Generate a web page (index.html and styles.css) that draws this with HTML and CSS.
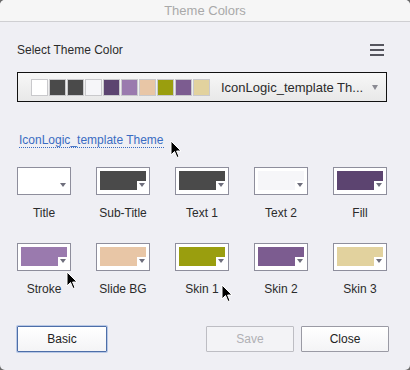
FILE: index.html
```html
<!DOCTYPE html>
<html lang="en">
<head>
  <meta charset="UTF-8" />
  <title>Theme Colors</title>
  <link rel="stylesheet" href="styles.css">
</head>
<body>
  <div class="window">
    <div class="titlebar">Theme Colors</div>
    <div class="content">
      <div class="header-row">
        <span class="label">Select Theme Color</span>
        <span class="menu-icon"><i></i><i></i><i></i></span>
      </div>

      <div class="theme-select">
        <div class="strip">
          <span style="background:#ffffff"></span>
          <span style="background:#4a4a4a"></span>
          <span style="background:#4a4a4a"></span>
          <span style="background:#f6f6f9"></span>
          <span style="background:#5c4470"></span>
          <span style="background:#9a7aae"></span>
          <span style="background:#e8c6a6"></span>
          <span style="background:#9a9e0e"></span>
          <span style="background:#7c5c90"></span>
          <span style="background:#e2d29e"></span>
        </div>
        <span class="select-text">IconLogic_template Th...</span>
        <span class="select-arrow"></span>
      </div>

      <div class="theme-link-row">
        <a class="theme-link">IconLogic_template Theme</a>
      </div>

      <div class="color-grid">
        <div class="color-item"><div class="swatch"><div class="fill" style="background:#ffffff"></div></div><div class="name">Title</div></div>
        <div class="color-item"><div class="swatch"><div class="fill" style="background:#4a4a4a"></div></div><div class="name">Sub-Title</div></div>
        <div class="color-item"><div class="swatch"><div class="fill" style="background:#4a4a4a"></div></div><div class="name">Text 1</div></div>
        <div class="color-item"><div class="swatch"><div class="fill" style="background:#f6f6f9"></div></div><div class="name">Text 2</div></div>
        <div class="color-item"><div class="swatch"><div class="fill" style="background:#5c4470"></div></div><div class="name">Fill</div></div>
        <div class="color-item"><div class="swatch"><div class="fill" style="background:#9a7aae"></div></div><div class="name">Stroke</div></div>
        <div class="color-item"><div class="swatch"><div class="fill" style="background:#e8c6a6"></div></div><div class="name">Slide BG</div></div>
        <div class="color-item"><div class="swatch"><div class="fill" style="background:#9a9e0e"></div></div><div class="name">Skin 1</div></div>
        <div class="color-item"><div class="swatch"><div class="fill" style="background:#7c5c90"></div></div><div class="name">Skin 2</div></div>
        <div class="color-item"><div class="swatch"><div class="fill" style="background:#e2d29e"></div></div><div class="name">Skin 3</div></div>
      </div>

      <div class="button-row">
        <button class="btn btn-focus">Basic</button>
        <span class="spacer"></span>
        <button class="btn" disabled>Save</button>
        <button class="btn">Close</button>
      </div>
    </div>

    <!-- mouse pointers captured in the shot -->
    <svg class="cursor c1" width="12" height="19" viewBox="0 0 12 19"><path d="M1 1 L1 15 L4.5 11.5 L7 17.5 L9 16.6 L6.6 11 L11 11 Z" fill="#000" stroke="#fff" stroke-width="1"/></svg>
    <svg class="cursor c2" width="12" height="19" viewBox="0 0 12 19"><path d="M1 1 L1 15 L4.5 11.5 L7 17.5 L9 16.6 L6.6 11 L11 11 Z" fill="#000" stroke="#fff" stroke-width="1"/></svg>
    <svg class="cursor c3" width="12" height="19" viewBox="0 0 12 19"><path d="M1 1 L1 15 L4.5 11.5 L7 17.5 L9 16.6 L6.6 11 L11 11 Z" fill="#000" stroke="#fff" stroke-width="1"/></svg>
  </div>
</body>
</html>
```

FILE: styles.css
```css
* {
  box-sizing: border-box;
  margin: 0;
  padding: 0;
}

html, body {
  height: 100%;
  background: #6a6a6a;
  overflow: hidden;
}

body {
  font-family: "Liberation Sans", Arial, sans-serif;
  color: #2b2b2b;
}

.window {
  position: relative;
  width: 410px;
  height: 370px;
  background: #efeff4;
  border-radius: 5px;
  overflow: hidden;
}

.titlebar {
  height: 22px;
  background: #f6f6f6;
  border-bottom: 1px solid #cfcfd2;
  text-align: center;
  font-size: 13px;
  line-height: 21px;
  color: #a9a9a9;
}

.content {
  padding: 21px 23px 0 17px;
}

.header-row {
  display: flex;
  justify-content: space-between;
  align-items: center;
  height: 14px;
}

.label {
  font-size: 12px;
  line-height: 14px;
}

.menu-icon {
  display: flex;
  flex-direction: column;
  gap: 3px;
  width: 14px;
  margin-right: 3px;
}

.menu-icon i {
  display: block;
  height: 2px;
  background: #55555e;
}

.theme-select {
  display: flex;
  align-items: center;
  height: 30px;
  margin-top: 15px;
  border: 1px solid #111;
  background: linear-gradient(#f7f7f7, #e8e8e8);
  padding-left: 13px;
}

.strip {
  display: flex;
  gap: 1px;
}

.strip span {
  width: 17px;
  height: 17px;
  border: 1px solid #c9c9cc;
}

.select-text {
  flex: 1;
  margin-left: 11px;
  font-size: 13px;
  color: #2b2b2b;
}

.select-arrow {
  width: 0;
  height: 0;
  margin-right: 8px;
  border-left: 3.5px solid transparent;
  border-right: 3.5px solid transparent;
  border-top: 5px solid #8a8a92;
}

.theme-link-row {
  margin-top: 28px;
  padding-left: 2px;
  height: 14px;
}

.theme-link {
  font-size: 12px;
  line-height: 13px;
  color: #3a6cc2;
  border-bottom: 1px dotted #3a6cc2;
  display: inline-block;
}

.color-grid {
  display: grid;
  grid-template-columns: repeat(5, 54px);
  column-gap: 25px;
  row-gap: 23px;
  margin-top: 23px;
}

.color-item {
  display: flex;
  flex-direction: column;
  align-items: center;
}

.swatch {
  position: relative;
  width: 54px;
  height: 28px;
  border: 1px solid #8e8e9c;
  background: #fff;
  padding: 3px 3px 4px 3px;
}

.fill {
  width: 100%;
  height: 100%;
}

.swatch::after {
  content: "";
  position: absolute;
  right: 3px;
  bottom: 4px;
  width: 9px;
  height: 9px;
  background: #fff;
}

.swatch::before {
  content: "";
  position: absolute;
  right: 4px;
  bottom: 7px;
  z-index: 1;
  border-left: 3.5px solid transparent;
  border-right: 3.5px solid transparent;
  border-top: 4px solid #6e6e7c;
}

.name {
  margin-top: 11px;
  font-size: 12px;
  line-height: 14px;
}

.button-row {
  display: flex;
  gap: 7px;
  margin-top: 30px;
  margin-right: -2px;
}

.spacer {
  flex: 1;
}

.btn {
  width: 88px;
  height: 26px;
  font-family: "Liberation Sans", Arial, sans-serif;
  font-size: 12px;
  color: #222;
  background: linear-gradient(#ffffff, #f4f4f6);
  border: 1px solid #9a9aa4;
  border-radius: 1px;
}

.btn-focus {
  width: 90px;
  border: 1px solid #4d6ea8;
  box-shadow: 0 0 0 1px #b8c8e6;
}

.btn:disabled {
  color: #b0b0b4;
  border-color: #bdbdc3;
  background: #f3f3f6;
}

.cursor {
  position: absolute;
}

.c1 { left: 170px; top: 140px; }
.c2 { left: 66px; top: 271px; }
.c3 { left: 221px; top: 284px; }
```
